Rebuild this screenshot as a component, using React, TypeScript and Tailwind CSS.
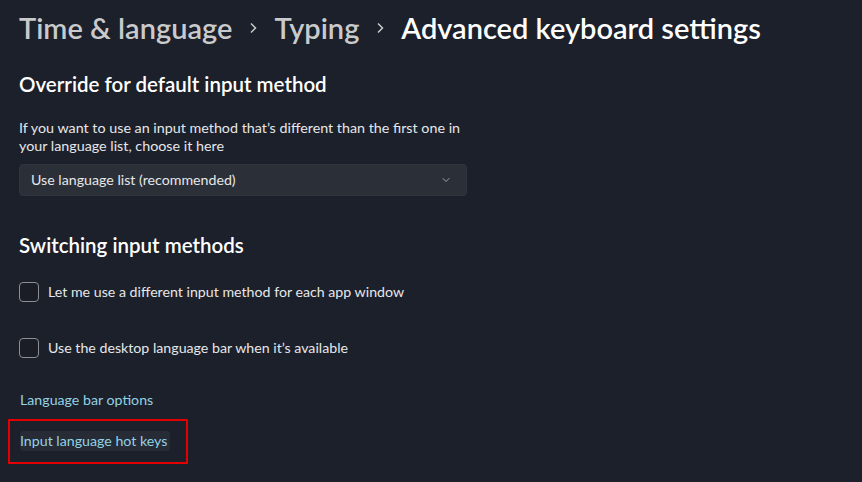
import { ChevronDown } from 'lucide-react';

const font = { fontFamily: '"Segoe UI", Lato, "Noto Sans", sans-serif' };

function Crumb() {
  return (
    <svg width="8" height="12" viewBox="0 0 8 12" className="mx-[17px] shrink-0 text-[#c9cacc]">
      <path d="M2 1.5 L6.5 6 L2 10.5" fill="none" stroke="currentColor" strokeWidth="1.5" />
    </svg>
  );
}

function CheckRow({ label, className }: { label: string; className?: string }) {
  return (
    <div className={`flex items-center h-[20px] ${className ?? ''}`}>
      <div className="w-[20px] h-[20px] rounded-[4px] border border-[#8a8d94] bg-[#1a1d25]" />
      <span className="ml-[9px] -mt-[1px] text-[14.2px] text-[#e6e7e9]">{label}</span>
    </div>
  );
}

export default function App() {
  return (
    <div
      className="w-[862px] h-[482px] overflow-hidden bg-[#1c202b] pl-[19px] flex flex-col"
      style={font}
    >
      {/* Breadcrumb */}
      <div className="flex items-center h-[36px] mt-[10px] text-[29px] font-semibold leading-[36px] whitespace-nowrap">
        <span className="text-[#c9cacc]">Time &amp; language</span>
        <Crumb />
        <span className="text-[#c9cacc]">Typing</span>
        <Crumb />
        <span className="text-white">Advanced keyboard settings</span>
      </div>

      {/* Override */}
      <h2 className="mt-[24px] h-[28px] text-[20.5px] leading-[28px] font-semibold text-white">
        Override for default input method
      </h2>
      <p className="mt-[21px] w-[450px] text-[14.3px] leading-[18px] text-[#e6e7e9]">
        If you want to use an input method that’s different than the first one in your language
        list, choose it here
      </p>
      <div className="mt-[9px] w-[448px] h-[32px] rounded-[4px] bg-[#2b2f38] border border-[#30343d] flex items-center justify-between pl-[11px] pr-[14px]">
        <span className="text-[14.2px] text-[#e6e7e9]">Use language list (recommended)</span>
        <ChevronDown size={12} strokeWidth={1.5} className="text-[#c9cacc]" />
      </div>

      {/* Switching */}
      <h2 className="mt-[35px] h-[28px] text-[20.5px] leading-[28px] font-semibold text-white">
        Switching input methods
      </h2>
      <CheckRow className="mt-[23px]" label="Let me use a different input method for each app window" />
      <CheckRow className="mt-[36px]" label="Use the desktop language bar when it’s available" />

      <div className="mt-[32px] h-[20px] ml-[1px] text-[14.2px] leading-[20px] text-[#93d2e6]">
        Language bar options
      </div>

      <div className="mt-[9px] -ml-[11px] w-[180px] h-[45px] border-2 border-[#e40000] pl-[10px] pt-[10px]">
        <div className="w-[150px] h-[20px] rounded-[3px] bg-[#262b35] text-[14.2px] leading-[20px] text-[#93d2e6]">
          Input language hot keys
        </div>
      </div>
    </div>
  );
}
